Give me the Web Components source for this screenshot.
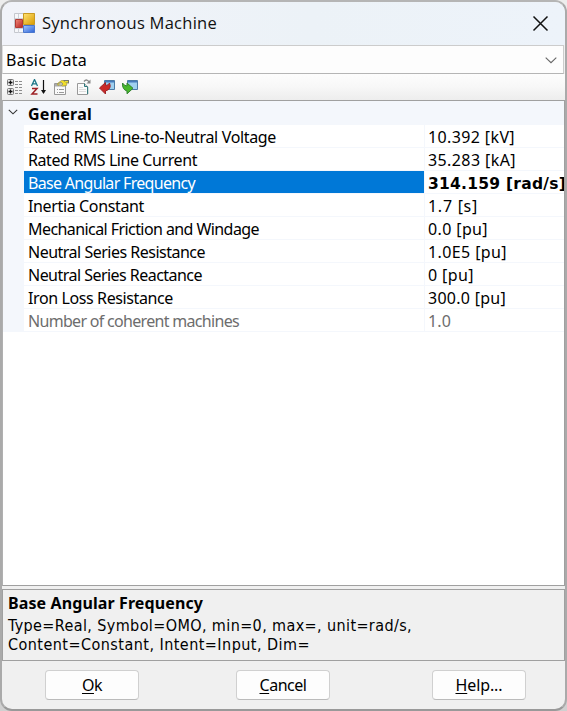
<!DOCTYPE html>
<html lang="en"><head><meta charset="utf-8"><title>Synchronous Machine</title>
<style>html,body{margin:0;width:567px;height:711px;overflow:hidden;background:linear-gradient(#ededed,#d0d0d0)}</style></head>
<body><machine-dialog></machine-dialog>
<script>
const define=(name,html,init)=>customElements.define(name,class extends HTMLElement{
  constructor(){super();this.attachShadow({mode:'open'}).innerHTML=html;}
  connectedCallback(){if(init)init.call(this,this.shadowRoot);}
});

// Text tracked so that its line takes the width given in the "w" attribute
define('fit-text','<style>:host{display:inline-block;white-space:pre}</style><slot></slot>',function(){
  const w=+this.getAttribute('w'),n=this.textContent.length;
  if(w)this.style.letterSpacing=((w-this.getBoundingClientRect().width)/n)+'px';
});

define('title-bar',`<style>
:host{display:flex;align-items:center;height:43px;box-sizing:border-box;padding:0 16px 0 12px;background:linear-gradient(90deg,#f1f3f9,#ecf2f7 55%,#edf3fa);font:16.500px/24px "Open Sans","Noto Sans",sans-serif;color:#111}
.t{flex:1;margin:0 0 2px 6px}svg{display:block}
</style>
<svg width="22" height="22" viewBox="0 0 22 22"><defs>
<linearGradient id="y" x1="0" y1="0" x2="1" y2="1"><stop stop-color="#ffe373"/><stop offset="1" stop-color="#d99a00"/></linearGradient>
<linearGradient id="r" x1="0" y1="0" x2="1" y2="1"><stop stop-color="#ef8a79"/><stop offset="1" stop-color="#b92020"/></linearGradient>
<linearGradient id="b" x1="0" y1="0" x2="1" y2="1"><stop stop-color="#a5c8ff"/><stop offset="1" stop-color="#2c62d5"/></linearGradient></defs>
<path d="M.5.5h20v19H.5z" fill="#f6f7fa" stroke="#c5c8ce"/><path d="M4.500 1v19M1 5.500h8M1 15.500h8" stroke="#cdd0d7"/>
<path d="M9.500.5h11v11h-11z" fill="url(#y)" stroke="#c99a21"/><path d="M1.500 6.500h7v8h-7z" fill="url(#r)" stroke="#b03b35"/><path d="M9.500 12.500h11v7h-11z" fill="url(#b)" stroke="#4a77cf"/></svg>
<span class="t"><slot></slot></span>
<svg width="17" height="17" viewBox="0 0 17 17"><path d="M1.500 1.500l14 14M15.500 1.500l-14 14" stroke="#111" stroke-width="1.500" fill="none"/></svg>`);

define('combo-box',`<style>
:host{display:flex;align-items:center;justify-content:space-between;height:29px;box-sizing:border-box;margin-right:1px;padding:1px 6px 0 3px;background:#fdfdfd;border:1px solid #ccc;border-left-color:#ddd;border-bottom-color:#b5b5b5}
svg{display:block}</style><slot></slot>
<svg width="12" height="7" viewBox="0 0 12 7"><path d="M.7.700l5.300 5 5.300-5" fill="none" stroke="#666" stroke-width="1.100"/></svg>`);

define('tool-strip',`<style>
:host{display:flex;height:26px;box-sizing:border-box;background:linear-gradient(#fdfdfd,#f7f7f7 50%,#ededed);padding:5px 0 0 5px;gap:7px}
svg{display:block;width:16px;height:16px}</style>
<svg viewBox="0 0 16 16"><g fill="#eee" stroke="#777"><rect x=".5" y=".5" width="6" height="6" rx="1"/><rect x=".5" y="9.500" width="6" height="6" rx="1"/></g><path d="M1.500 3.500h4M3.500 1.500v4M1.500 12.500h4M3.500 10.500v4" stroke="#111" stroke-width="1.300"/><path d="M8 2.500h3M8 5.500h3M8 8.500h3M8 11.500h3M8 14.500h3M12 2.500h4M12 5.500h4M12 8.500h4M12 11.500h4M12 14.500h4" stroke="#8d8d8d" stroke-dasharray="3 1"/></svg>
<svg viewBox="0 0 16 16"><path d="M1.500 7l3-6.500 3 6.500M2.800 4.800h3.400" fill="none" stroke="#1d7788" stroke-width="1.300"/><path d="M2 9.500h5l-5 5.500h5.500" fill="none" stroke="#9d2024" stroke-width="1.500"/><path d="M13.500 1v13" stroke="#111" stroke-width="1.200"/><path d="M11 11h5l-2.500 4z" fill="#111"/></svg>
<svg viewBox="0 0 16 16"><path d="M1.500 4.500h11v11h-11z" fill="#fafafa" stroke="#999"/><path d="M2 5h10v2.500H2z" fill="#aaa"/><path d="M4 10.500h1m1 0h5M4 13.500h1m1 0h5" stroke="#999"/><path d="M4.500 4.500l4-3h3.500l2 2-.5 3-4 .500-2.500-1.500-2 1z" fill="#f3df28" stroke="#a39a40" stroke-width=".7"/><path d="M10 1h6v3.500l-3-.500z" fill="#77776a"/><path d="M12 2h3v1.500h-3z" fill="#eee432"/><path d="M5 5l3-2 2 2-1.500 1.500" fill="#c1c1aa" stroke="#777" stroke-width=".6"/></svg>
<svg viewBox="0 0 16 16"><path d="M1.500 4.500h7l3 3v8h-10z" fill="#fbfbfb" stroke="#999"/><path d="M8.500 4.500v3h3" fill="#ccc" stroke="#26777a"/><path d="M11.700 8v7" stroke="#26777a"/><path d="M3 8.500h4M3 10.500h7M3 12.500h7" stroke="#ddd"/><path d="M8 2.500c2-2.500 4-1.500 5 .5" fill="none" stroke="#888" stroke-width="1.300"/><path d="M10.500 4.500h4v-4z" fill="#888"/></svg>
<svg viewBox="0 0 16 16"><path d="M5.500 1.500h10v9h-10z" fill="#9fd0ef" stroke="#4b7ba6"/><path d="M6 2h9v1.500H6z" fill="#477bbc"/><path d="M.5 9l6-5.500v3q3 0 4-2.500 2.500 6-4 8v3z" fill="#c92a28" stroke="#9d2428" stroke-width="1"/></svg>
<svg viewBox="0 0 16 16"><path d="M5.500 1.500h10v9h-10z" fill="#9fd0ef" stroke="#4b7ba6"/><path d="M6 2h9v1.500H6z" fill="#477bbc"/><path d="M.5 4q2 3 4.500 3V4l6 5.300-6 5.500V12Q0 10.500.5 4z" fill="#48b82c" stroke="#338231" stroke-width="1"/></svg>`);

define('property-group',`<style>
:host{display:block;background:#f4f7fc}.h{display:flex;height:24px;align-items:center;font-weight:700}svg{width:10px;height:6px;margin:0 10px 2px 5px}.h span{padding-top:2px}.rows{padding-left:21px}
</style><div class="h"><svg viewBox="0 0 10 6"><path d="M.8.800l4.200 4 4.200-4" fill="none" stroke="#333" stroke-width="1.100"/></svg><span><slot name="title"></slot></span></div><div class="rows"><slot></slot></div>`);

define('property-row',`<style>
:host{display:grid;grid-template-columns:400px 1fr;height:22px;padding-bottom:1px;line-height:24px;color:#000}
div{background:#fff;padding-left:4px;overflow:hidden;white-space:nowrap}.v{margin-left:1px;padding-left:3px}
:host([selected]) .k{background:#0078d7;color:#fff}:host([selected]) .v{font-family:"DejaVu Sans",sans-serif;font-size:15.500px;line-height:26px;height:22px;font-weight:700}:host([disabled]){color:#6d6d6d}
</style><div class="k"><slot></slot></div><div class="v"><slot name="value"></slot></div>`);

define('help-pane',`<style>
:host{display:block;height:72px;box-sizing:border-box;border:1px solid #a0a0a0;padding:3px 5px 0;line-height:19px}.t{font-weight:700;line-height:20px;margin-bottom:3px}
div{white-space:nowrap}</style><div class="t"><slot name="title"></slot></div><slot></slot>`);

define('push-button',`<style>
:host{display:block;width:94px;height:30px;box-sizing:border-box;border:1px solid #d0d0d0;border-bottom-color:#bbb;border-radius:4px;background:#fdfdfd;text-align:center;line-height:29px}
</style><slot></slot>`);

const rows=[['Rated RMS Line-to-Neutral Voltage',248,'10.392 [kV]',87],['Rated RMS Line Current',169,'35.283 [kA]',88],['Base Angular Frequency',167,'314.159 [rad/s]',138,'selected'],['Inertia Constant',116,'1.7 [s]',50],['Mechanical Friction and Windage',231,'0.0 [pu]',60],['Neutral Series Resistance',177,'1.0E5 [pu]',79],['Neutral Series Reactance',174,'0 [pu]',46],['Iron Loss Resistance',145,'300.0 [pu]',78],['Number of coherent machines',211,'1.0',23,'disabled']];
define('machine-dialog',`<style>
:host{display:flex;flex-direction:column;width:567px;height:711px;box-sizing:border-box;border:2px solid #aaa;border-top-color:#b5b5b5;border-bottom-color:#999;border-radius:12px;overflow:hidden;background:#f0f0f0;font:16px/22px "Noto Sans",sans-serif;color:#000}
.grid{height:486px;box-sizing:border-box;background:#fff;border:1px solid #a0a0a0;border-left-color:#b0b0b0;margin-bottom:3px}
.b{display:flex;padding:9px 0 0 43px}.b push-button:nth-child(2){margin:0 102px 0 97px}.b u{text-decoration-thickness:1px;text-underline-offset:2px}
combo-box,.grid,help-pane{flex:none}help-pane div{height:19px;font:16px/19px "DejaVu Sans Condensed","DejaVu Sans",sans-serif;font-stretch:condensed}
</style>
<title-bar><fit-text w="175">Synchronous Machine</fit-text></title-bar>
<combo-box><fit-text w="81">Basic Data</fit-text></combo-box>
<tool-strip></tool-strip>
<div class="grid"><property-group><fit-text slot="title" w="64">General</fit-text>
${rows.map(([k,kw,v,vw,s=''])=>`<property-row ${s}><fit-text w="${kw}">${k}</fit-text><fit-text slot="value" w="${vw}">${v}</fit-text></property-row>`).join('')}</property-group></div>
<help-pane><fit-text slot="title" w="195">Base Angular Frequency</fit-text>
<div><fit-text w="404">Type=Real, Symbol=OMO, min=0, max=, unit=rad/s,</fit-text></div><div><fit-text w="302">Content=Constant, Intent=Input, Dim=</fit-text></div></help-pane>
<div class="b"><push-button><fit-text w="20"><u>O</u>k</fit-text></push-button><push-button><fit-text w="47"><u>C</u>ancel</fit-text></push-button><push-button><fit-text w="47"><u>H</u>elp...</fit-text></push-button></div>`);
</script></body></html>
